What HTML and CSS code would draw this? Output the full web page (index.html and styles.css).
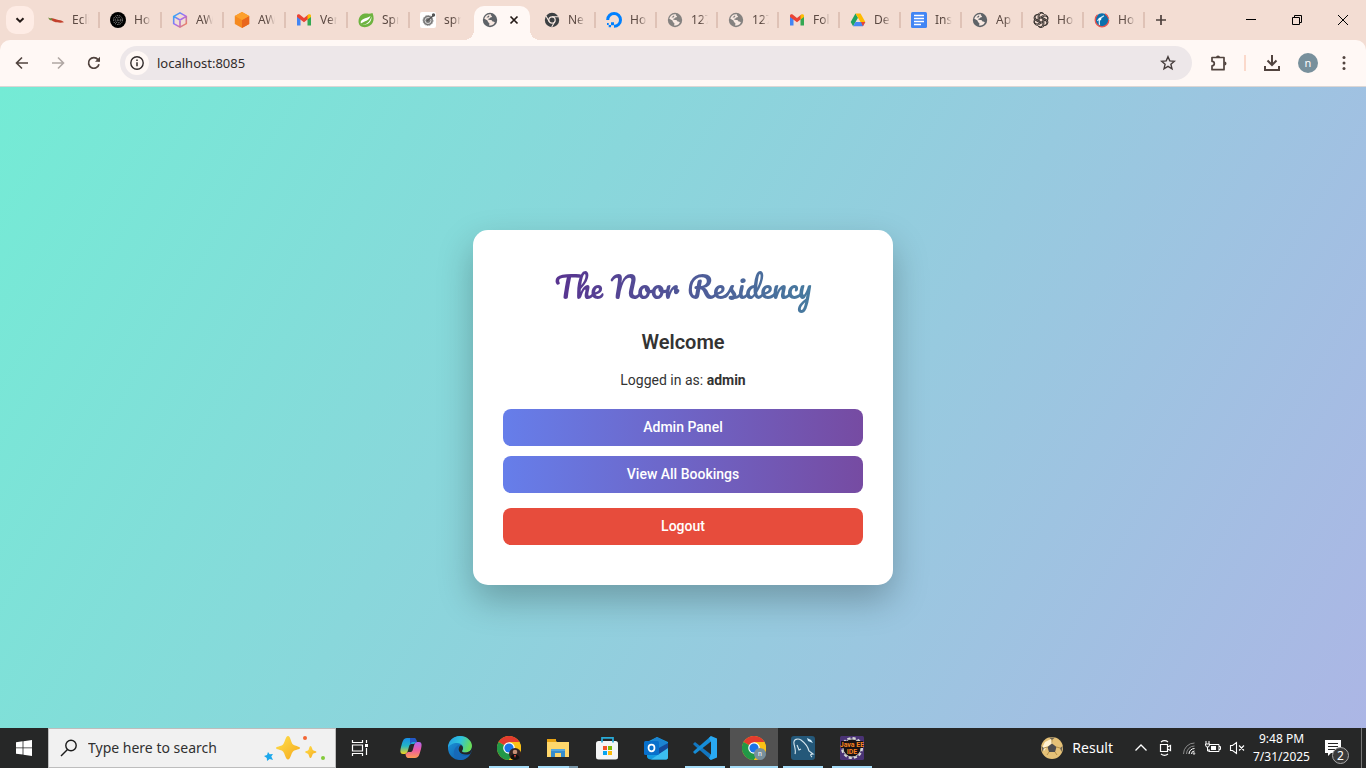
FILE: index.html
```html
<!DOCTYPE html>
<html lang="en">
<head>
<meta charset="utf-8">
<title>The Noor Residency</title>
<link rel="stylesheet" href="styles.css">
</head>
<body>
<svg class="defs" aria-hidden="true">
  <symbol id="globe" viewBox="0 0 16 16"><circle cx="8" cy="8" r="7.2" fill="currentColor"/><path d="M9 2.200C8.500 3.300 9 3.800 10 3.900c0 1.300-.8 1.500-1.900 1.600-.3 1.200-1.300 1.100-2 1.600.4.900 1.200.8 2.200.8 1.500 0 2 .7 2.200 1.600 1 0 1.900.1 2.400.8-.8 1.900-2 2.700-3.900 3.200-.8.200-1.400.1-2 0 .3-1.200.9-1.900-.2-2.700-.9-.6-1.200-1.300-1.300-2.200L2.300 6.700C2.900 4 5.500 1.800 9 2.200z" fill="#f8e9e2"/><path d="M3 7.500l2.500 2.300v1L3.500 11C2.500 10 2.200 9 2.200 7.500zM4.500 5.500h2l1-1.500-1-.5z" fill="currentColor"/></symbol>
  <symbol id="gmail" viewBox="0 0 16 16"><path d="M1 13.500V4l3.500 2.600v6.900z" fill="#4285f4"/><path d="M11.500 13.500V6.600L15 4v9.500z" fill="#34a853"/><path d="M1 5V3.700C1 2.200 2.600 1.800 3.600 2.600L8 6l4.400-3.400v4.200L8 10.300 1 5z" fill="#ea4335"/><path d="M11.500 7.500V3.300l.9-.7c1-.8 2.600-.4 2.600 1.100V5z" fill="#fbbc04"/></symbol>
  <symbol id="openai" viewBox="0 0 24 24"><g fill="none" stroke="currentColor" stroke-width="1.500"><path id="petal" d="M9.200 13.600V5.800a4.300 4.300 0 0 1 8-2.100M9.200 8.600l6.600-3.800a4.300 4.300 0 0 1 6 5.700"/><use href="#petal" transform="rotate(60 12 12)"/><use href="#petal" transform="rotate(120 12 12)"/><use href="#petal" transform="rotate(180 12 12)"/><use href="#petal" transform="rotate(240 12 12)"/><use href="#petal" transform="rotate(300 12 12)"/></g></symbol>
  <symbol id="chrome" viewBox="0 0 24 24"><circle cx="12" cy="12" r="12" fill="#fbc116"/><path d="M12 12L1.600 6A12 12 0 0 1 22.400 6H12z" fill="#e33b2e"/><path d="M1.600 6A12 12 0 0 0 12 24l5.200-9L12 12z" fill="#229847"/><path d="M12 24l5.200-9c1.600-3 .2-7-5.200-9h10.400A12 12 0 0 1 12 24z" fill="#fbc116"/><circle cx="12" cy="12" r="5.800" fill="#fff"/><circle cx="12" cy="12" r="4.600" fill="#1a73e8"/></symbol>
  <linearGradient id="lavender" x1="0" y1="0" x2="1" y2="1"><stop stop-color="#19b8f5"/><stop offset=".5" stop-color="#a46af5"/><stop offset="1" stop-color="#ff8a3c"/></linearGradient>
  <linearGradient id="cop-a" x1="0" y1="0" x2="0" y2="1"><stop stop-color="#188de8"/><stop offset=".5" stop-color="#24b5c5"/><stop offset="1" stop-color="#f5d51b"/></linearGradient>
  <linearGradient id="cop-b" x1="0" y1="0" x2="0" y2="1"><stop stop-color="#b065f1"/><stop offset=".5" stop-color="#ef5ca1"/><stop offset="1" stop-color="#ff9b52"/></linearGradient>
  <linearGradient id="edge-a" x1="0" y1="0" x2="1" y2=".3"><stop stop-color="#249ce4"/><stop offset=".55" stop-color="#2fc4dd"/><stop offset="1" stop-color="#69dc59"/></linearGradient>
  <linearGradient id="edge-b" x1="0" y1="0" x2="1" y2="1"><stop stop-color="#1d9be0"/><stop offset="1" stop-color="#0c4d9c"/></linearGradient>
  <linearGradient id="gold" x1="0" y1="0" x2="1" y2="1"><stop stop-color="#ffe14d"/><stop offset="1" stop-color="#f5a81c"/></linearGradient>
</svg>

<header class="browser">
  <div class="tabstrip">
    <button class="tab-search" aria-label="Search tabs"><svg viewBox="0 0 28 28"><path d="M10.500 12.200l3.500 3.500 3.500-3.500" fill="none" stroke="#241a17" stroke-width="2"/></svg></button>
    <nav class="tabs" aria-label="Open tabs">
      <a class="tab" href="#"><svg viewBox="0 0 16 16"><path d="M2.500 6.500c3-.7 5 1.300 8 1.500 2.500.2 4.500 1 5.500 2.300-4 .9-12 .3-13.500-3.800z" fill="#c2402c"/><path d="M0 5.500l2 .7 2.500.3-1 1.900-1.800-.5z" fill="#6e8c3b"/></svg><span>Ecli</span></a>
      <a class="tab" href="#"><svg viewBox="0 0 16 16"><circle cx="8" cy="8" r="8" fill="#000"/><g fill="none" stroke="#bbb" stroke-width="1" stroke-dasharray=".8 1"><circle cx="8" cy="8" r="4.500"/><circle cx="8" cy="8" r="2.800"/><circle cx="8" cy="8" r="1"/></g></svg><span>Ho</span></a>
      <a class="tab" href="#"><svg viewBox="0 0 16 16"><path d="M8 .9l6.300 3.500v7.200L8 15.100l-6.300-3.500V4.400zM1.700 4.400L8 8l6.300-3.600M8 8v7" fill="none" stroke="url(#lavender)" stroke-width="1.600"/></svg><span>AW</span></a>
      <a class="tab" href="#"><svg viewBox="0 0 16 16"><path d="M8 0l7.200 4v8L8 16 .8 12V4z" fill="#f58a20"/><path d="M8 8l7.200-4v8L8 16z" fill="#e9661c"/><path d="M8 0l7.200 4L8 8 .8 4z" fill="#fda02d"/></svg><span>AW</span></a>
      <a class="tab" href="#"><svg><use href="#gmail"/></svg><span>Ver</span></a>
      <a class="tab" href="#"><svg viewBox="0 0 16 16"><path d="M14.500 1c2 5 1.500 10-2.500 12.500C8.500 16 4 15.500 2 13.500-.5 10.500.2 5 4 2.500c3-2 7 .2 10.500-1.500z" fill="#6db33f"/><path d="M2.500 12.500c4 .8 9-1 11-8 .3 5-3 9.500-11 8z" fill="#fff"/><path d="M2.800 11.500c-1-5 5-4.500 9.700-7.500-1.500 5-6 5-9.700 7.500z" fill="#fff"/></svg><span>Spr</span></a>
      <a class="tab" href="#"><svg viewBox="0 0 16 16"><rect width="16" height="16" rx="2" fill="#fff"/><circle cx="8" cy="8.500" r="5" fill="#777" stroke="#999" stroke-dasharray="1.500 1"/><circle cx="8" cy="8.500" r="3" fill="none" stroke="#ddd"/><path d="M7 9l7-6" stroke="#555" stroke-width="1.500"/><circle cx="13.500" cy="3" r="1.700" fill="#555"/></svg><span>spr</span></a>
      <a class="tab active" href="#" aria-current="page"><svg class="slate"><use href="#globe"/></svg><svg class="close" viewBox="0 0 16 16"><path d="M4.500 4.500l7 7m0-7l-7 7" stroke="#241a17" stroke-width="1.700"/></svg></a>
      <a class="tab" href="#"><svg viewBox="0 0 16 16"><circle cx="8" cy="8" r="7.200" fill="#3c4043"/><circle cx="8" cy="8" r="3.200" fill="none" stroke="#f8e9e2" stroke-width="1.200"/><path d="M8 4.800h6.500M5.200 9.600L2 4M10.800 9.600L7.700 15" stroke="#f8e9e2" stroke-width="1.100"/></svg><span>Ne</span></a>
      <a class="tab" href="#"><svg viewBox="0 0 16 16"><path d="M8 14.300A6.400 6.400 0 1 0 1.700 8" fill="none" stroke="#0080ff" stroke-width="3"/><path d="M5 10.200h3v3H5zM2.700 13H5v2.300H2.700zM1 11h1.700v2H1z" fill="#0080ff"/></svg><span>Ho</span></a>
      <a class="tab" href="#"><svg class="gray"><use href="#globe"/></svg><span>127</span></a>
      <a class="tab" href="#"><svg class="gray"><use href="#globe"/></svg><span>127</span></a>
      <a class="tab" href="#"><svg><use href="#gmail"/></svg><span>Fol</span></a>
      <a class="tab" href="#"><svg viewBox="0 0 16 16"><path d="M5.500 1.500L.7 10l2.400 4.200L8 5.800z" fill="#1ea362"/><path d="M5.500 1.500h5L15.300 10h-4.800z" fill="#ffba00"/><path d="M3.100 14.200L5.500 10h9.800l-2.400 4.200z" fill="#4688f4"/><path d="M11 10h4.300l-2.400 4.200z" fill="#ea4335"/></svg><span>De</span></a>
      <a class="tab" href="#"><svg viewBox="0 0 16 16"><rect width="16" height="16" rx="1.500" fill="#4285f4"/><path d="M3 3.500h10M3 6.500h10M3 9.500h10M3 12.500h7" stroke="#fff" stroke-width="1.500"/></svg><span>Ins</span></a>
      <a class="tab" href="#"><svg class="slate"><use href="#globe"/></svg><span>Ap</span></a>
      <a class="tab" href="#"><svg class="ink"><use href="#openai"/></svg><span>Ho</span></a>
      <a class="tab" href="#"><svg viewBox="0 0 16 16"><circle cx="8" cy="8" r="6.800" fill="#0c6fac" stroke="#e6544f" stroke-width="1.300" stroke-dasharray="27 8 6 4"/><path d="M3.500 9c1.500-3 3.500-4 6.500-5M5.500 13c-1-4 .500-7 4-9" fill="none" stroke="#d4effa" stroke-width="1.200"/><circle cx="6" cy="7" r="1.300" fill="#fff"/></svg><span>Ho</span></a>
    </nav>
    <button class="new-tab" aria-label="New tab"><svg viewBox="0 0 16 16"><path d="M8 3v10M3 8h10" stroke="#4c403c" stroke-width="1.700"/></svg></button>
    <div class="window-controls">
      <button aria-label="Minimize"><svg viewBox="0 0 16 16"><path d="M3 7.500h10" stroke="#000"/></svg></button>
      <button aria-label="Restore"><svg viewBox="0 0 16 16"><path d="M3.500 5.500h7v7h-7zM5.500 5.500v-2h7v7h-2" fill="none" stroke="#000"/></svg></button>
      <button aria-label="Close"><svg viewBox="0 0 16 16"><path d="M3 3l10 10M13 3L3 13" stroke="#000"/></svg></button>
    </div>
  </div>
  <div class="toolbar">
    <button class="nav-button" aria-label="Back"><svg viewBox="0 0 16 16"><path d="M14 8H3M8 2.500L2.500 8 8 13.500" fill="none" stroke="#51433e" stroke-width="1.600"/></svg></button>
    <button class="nav-button" aria-label="Forward"><svg viewBox="0 0 16 16"><path d="M2 8h11M8 2.500L13.500 8 8 13.500" fill="none" stroke="#b0a7a3" stroke-width="1.600"/></svg></button>
    <button class="nav-button" aria-label="Reload"><svg viewBox="0 0 16 16"><path d="M13 9.200A5.300 5.300 0 1 1 12 4.600l1.500 1.700" fill="none" stroke="#51433e" stroke-width="1.700"/><path d="M14 1.800v5H9z" fill="#51433e"/></svg></button>
    <div class="omnibox">
      <button class="site-info" aria-label="Site information"><svg viewBox="0 0 16 16"><circle cx="8" cy="8" r="6.200" fill="none" stroke="#312b2b" stroke-width="1.400"/><path d="M8 7.200v4M8 4.500V6" stroke="#312b2b" stroke-width="1.500"/></svg></button>
      <input class="address" aria-label="Address" value="localhost:8085">
      <button class="bookmark" aria-label="Bookmark this page"><svg viewBox="0 0 16 16"><path d="M8 1.700l1.800 4.200 4.600.4-3.500 3 1.100 4.500L8 11.400l-4 2.400 1.100-4.500-3.500-3 4.600-.4z" fill="none" stroke="#453c3b" stroke-width="1.400"/></svg></button>
    </div>
    <div class="actions">
      <button aria-label="Extensions"><svg viewBox="0 0 20 20"><path d="M4 4.500h12v12.200H4v-3.800a2.300 2.300 0 0 0 0-4.600z" fill="none" stroke="#51433e" stroke-width="1.700" stroke-linejoin="round"/><path d="M8 4.500a2 2 0 0 1 4 0zM16.500 8.500a2 2 0 0 1 0 4z" fill="#51433e"/></svg></button>
      <i class="divider"></i>
      <button aria-label="Downloads"><svg viewBox="0 0 20 20"><path d="M10 2v10M5.500 7.500L10 12l4.500-4.500M3 13v4h14v-4" fill="none" stroke="#51433e" stroke-width="2"/></svg></button>
      <button class="profile" aria-label="Profile">n</button>
      <button aria-label="Menu"><svg viewBox="0 0 20 20" fill="#51433e"><circle cx="10" cy="4.500" r="1.500"/><circle cx="10" cy="10" r="1.500"/><circle cx="10" cy="15.500" r="1.500"/></svg></button>
    </div>
  </div>
</header>

<main class="page">
  <section class="card">
    <h1 class="brand">The Noor Residency</h1>
    <h2 class="welcome">Welcome</h2>
    <p class="session">Logged in as: <strong>admin</strong></p>
    <a class="button" href="#">Admin Panel</a>
    <a class="button" href="#">View All Bookings</a>
    <button class="button logout">Logout</button>
  </section>
</main>

<footer class="taskbar">
  <button class="start" aria-label="Start"><svg viewBox="0 0 16 16" fill="#fff"><path d="M0 2.300L6.600 1.300v6.200H0zM7.400 1.200L16 0v7.500H7.400zM0 8.300h6.600v6.300L0 13.700zM7.400 8.300H16V16l-8.600-1.200z"/></svg></button>
  <div class="search">
    <svg class="magnifier" viewBox="0 0 18 18"><circle cx="11" cy="6.500" r="5.200" fill="none" stroke="#1b1b1b" stroke-width="1.400"/><path d="M7.500 10.500L1 17" stroke="#1b1b1b" stroke-width="1.400"/></svg>
    <input aria-label="Search" placeholder="Type here to search">
    <svg class="sparkles" viewBox="0 0 64 28"><path d="M25 2c2.500 0 3 7 5 8.500S37 12.500 37 14s-5 1.500-7 3.500S27.500 25.500 25 25.500 22 19.500 20 17.500 13 15.500 13 14s5-1.500 7-3.500S22.500 2 25 2z" fill="url(#gold)"/><path d="M47.500 12c1.300 0 1.600 3.500 2.600 4.300s3.400.7 3.400 1.700-2.700.9-3.500 1.800-1.200 4.200-2.500 4.200-1.500-3.300-2.300-4.100-3.200-.9-3.200-1.900 2.500-.9 3.300-1.700.9-4.300 2.200-4.300z" fill="url(#gold)"/><path d="M5 18l1.700 2.300L10 20l-1.700 2.500L10 26l-3.300-1L4 27l-.2-3L1 22l3-1z" fill="#1ca8ec"/><circle cx="42" cy="4" r="2" fill="#f26634"/><circle cx="60" cy="24" r="2" fill="#84ca3a"/></svg>
  </div>
  <button class="task-view" aria-label="Task view"><svg viewBox="0 0 18 18" fill="none" stroke="#fff" stroke-width="1.200"><path d="M1.500 1v2.500h10V1M1.500 17v-2.500h10V17M1.500 6h10v6h-10zM15.500 1v3M15.500 9v7"/><path d="M14 5h3v3h-3z" fill="#fff" stroke="none"/></svg></button>
  <nav class="apps" aria-label="Pinned apps">
    <button aria-label="Copilot"><svg viewBox="0 0 24 24"><path d="M8 2h6c3 0 3 2 3.500 4L15 8h-3c-3 0-2 10-6 10H4c-3 0-3-3-2-7 1.500-5 2-9 6-9z" fill="url(#cop-a)"/><path d="M11 2h4c2 0 2.500 2 3 4h-3c-2 0-3 0-4 3z" fill="#2358c7"/><path d="M16 22h-6c-3 0-3-2-3.500-4L9 16h3c3 0 2-10 6-10h2c3 0 3 3 2 7-1.500 5-2 9-6 9z" fill="url(#cop-b)"/></svg></button>
    <button aria-label="Edge"><svg viewBox="0 0 24 24"><circle cx="12" cy="12" r="12" fill="url(#edge-b)"/><path d="M0 12C0 5 5 0 12 0s12 5 12 10-4 6.500-7 6.500-3.500-1.500-2.500-2.500C16.500 11 14 7 9 7c-4 0-8 2-9 5z" fill="url(#edge-a)"/><path d="M13 9c-3 1-4 4-3 7 1.500 4 7 5 12 2-2 4-6 6-10 6C5 23 4 14 9 10c1.500-1 2.500-1.300 4-1z" fill="#1769b8"/><path d="M13 9c-2 1-3 4-2 6 2 4 7 4 11 3l2-4v-4c0 5-4 6.500-7 6.500S13.500 15 14.500 14c1-1.500.5-4-1.500-5z" fill="#252525"/></svg></button>
    <button class="running" aria-label="Chrome, first profile"><svg viewBox="0 0 24 24"><use href="#chrome"/><circle cx="18" cy="18" r="6" fill="#322322"/><circle cx="18" cy="16" r="2.300" fill="#c69077"/><path d="M13.500 22c0-5 8-5 9 0-3 2.500-6 2.500-9 0z" fill="#111"/><path d="M17 19h2l-1 3z" fill="#e5453c"/></svg></button>
    <button class="running stacked" aria-label="File Explorer"><svg viewBox="0 0 24 24"><path d="M1 4h8l2 2h12v15H1z" fill="#f6b83a"/><path d="M1 6h22v15H1z" fill="#ffd76b"/><path d="M1 3h9v3H1z" fill="#e8a313"/><path d="M5 13h14v8h-4v-4H9v4H5z" fill="#368dcc"/><path d="M5 13h14v2H5z" fill="#56a8de"/></svg></button>
    <button aria-label="Microsoft Store"><svg viewBox="0 0 24 24"><rect x="1" y="5" width="22" height="18.500" rx="2.500" fill="#f4f5f5"/><path d="M7 6.500V1.800h11v4.700" fill="none" stroke="#29acd9" stroke-width="1.700"/><path d="M8 10h4v4H8z" fill="#f15325"/><path d="M13 10h4v4h-4z" fill="#80bb04"/><path d="M8 15h4v4H8z" fill="#06a5f0"/><path d="M13 15h4v4h-4z" fill="#febb08"/></svg></button>
    <button aria-label="Outlook"><svg viewBox="0 0 24 24"><path d="M3 6l10-5 11 5v15c0 2-1 2.500-3 2.500H7c-2 0-4-1-4-3z" fill="#139be0"/><path d="M4 7l9-6 11 6-12 7z" fill="#1c84d2"/><path d="M13 13l11-6v7l-9 4z" fill="#144a9b"/><path d="M24 12v9c0 2-1 2.500-3 2.500H7z" fill="#3cbdf0"/><rect y="5" width="15" height="14" rx="1.500" fill="#0870cb"/><ellipse cx="7.500" cy="12" rx="3" ry="3.300" fill="none" stroke="#fff" stroke-width="1.700"/></svg></button>
    <button class="running" aria-label="Visual Studio Code"><svg viewBox="0 0 24 24"><path d="M0 8l2-2 16 12.500V24L2 10z" fill="#1276bf"/><path d="M0 16l2 2L18 5.500V0L2 14z" fill="#168dd7"/><path d="M18 0l6 2.500v19L18 24l-2-1.500 2-4.500V6l-2-4z" fill="#29a9f2"/></svg></button>
    <button class="running current" aria-label="Chrome, profile n"><svg viewBox="0 0 24 24"><use href="#chrome"/><circle cx="18" cy="18" r="6" fill="#78909c"/><text class="badge-letter" x="18" y="20">n</text></svg></button>
    <button class="running" aria-label="MySQL Workbench"><svg viewBox="0 0 24 24"><rect width="24" height="24" rx="3" fill="#245879"/><path d="M4 18c1-3 0-6-1-10-1-5 4-6 7-4 4 3 7 7 8 11l4 3c-3 0-3 1-1 3M6 9l2 5 2-1" fill="none" stroke="#d6e6ee" stroke-width="1.100"/><path d="M16 2l1 3 5 2-2-3z" fill="#d8f1ff"/></svg></button>
    <button class="running" aria-label="Eclipse Java EE IDE"><svg viewBox="0 0 24 24"><rect width="24" height="24" rx="1.500" fill="#4a3375"/><circle cx="12" cy="12" r="9.500" fill="none" stroke="#d9d9d9" stroke-width="3" stroke-dasharray="3 2"/><circle cx="12" cy="12" r="9" fill="#171216" stroke="#bbb"/><path d="M1 5h22v7H1z" fill="#171216"/><text class="ide-text" x="12" y="11">Java EE</text><text class="ide-text" x="12" y="18">IDE</text></svg></button>
  </nav>
  <div class="tray">
    <a class="result" href="#"><svg viewBox="0 0 22 22"><circle cx="11" cy="11" r="11" fill="#e5c177"/><path d="M4 5l6-3 2 4-6 4-3 4-2-3z" fill="#fff2d0"/><path d="M11 6.500l4.500 3.500-1.500 5H8l-1.500-5z" fill="#4c4b4d"/><path d="M8 .5h6L11 3zM.2 9L3 11l-1.500 4zM21.800 9L19 11l1.500 4z" fill="#6b6252"/><path d="M11 3v3.500M3 11l3.500-1M19 11l-3.500-1M8 15l-2 3M14 15l2 3" stroke="#b58f46"/></svg>Result</a>
    <div class="status">
      <button aria-label="Show hidden icons"><svg viewBox="0 0 16 16"><path d="M2.500 10.500L8 5l5.500 5.500" fill="none" stroke="#fff" stroke-width="1.300"/></svg></button>
      <button aria-label="Meet Now"><svg viewBox="0 0 16 16"><path d="M3.500 4.500h7v7h-7zM10.500 7l3-1.500v5l-3-1.500M4 2c2-1.500 5-1.500 7 0M4 14c2 1.500 5 1.500 7 0" fill="none" stroke="#fff" stroke-width="1.200"/></svg></button>
      <button aria-label="Network"><svg viewBox="0 0 16 16" fill="none" stroke="#8b8b8b"><path d="M2.500 14A11 11 0 0 1 13.500 3M5.500 14a8 8 0 0 1 8-8"/><path d="M8 14a5.500 5.500 0 0 1 5.500-5.500M10.500 14a3 3 0 0 1 3-3" stroke="#fff"/><circle cx="13" cy="13.500" r="1" fill="#fff"/></svg></button>
      <button aria-label="Battery"><svg viewBox="0 0 16 16"><path d="M5 4.500h9v7H4V9M14 6.500h1.500v3H14M1 1v3M4 1v3M2.500 7v4H5M.5 4h4v1l-1 2h-2l-1-2z" fill="none" stroke="#fff"/><path d="M6 6h5v4H6z" fill="#fff"/></svg></button>
      <button aria-label="Volume muted"><svg viewBox="0 0 16 16"><path d="M1.500 5.500h2l4-3v11l-4-3h-2zM10 5.500l5 5M15 5.500l-5 5" fill="none" stroke="#fff" stroke-width="1.100"/></svg></button>
    </div>
    <div class="clock"><time>9:48 PM</time><time>7/31/2025</time></div>
    <button class="notifications" aria-label="2 notifications"><svg viewBox="0 0 16 16"><path d="M0 0h16v13H6l-3 3v-3H0z" fill="#fff"/><path d="M3 3.500h10M3 6.500h10M3 9.500h7" stroke="#252525"/></svg><span>2</span></button>
  </div>
</footer>
</body>
</html>
```
FILE: styles.css
```css
* { box-sizing: border-box; }

body {
  margin: 0;
  min-height: 100vh;
  display: flex;
  flex-direction: column;
  font-family: "Noto Sans", "Open Sans", sans-serif;
}

button {
  display: flex;
  align-items: center;
  justify-content: center;
  padding: 0;
  border: 0;
  background: none;
  font: inherit;
  color: inherit;
}

a { color: inherit; text-decoration: none; }
input { border: 0; padding: 0; background: none; font: inherit; outline: 0; min-width: 0; }
svg { width: 16px; height: 16px; flex: none; display: block; }
.defs { position: absolute; width: 0; height: 0; }

/* Browser window */
.browser { background: #f3ddd3; }
.tabstrip { height: 40px; display: flex; align-items: center; padding-left: 6px; }
.tab-search { width: 28px; height: 28px; border-radius: 10px; background: #feece5; }
.tab-search svg { width: 28px; height: 28px; }

.tabs {
  flex: 0 1 1107px;
  min-width: 0;
  margin-left: 4px;
  align-self: stretch;
  display: grid;
  grid-template-columns: repeat(9, 62fr) repeat(9, 61fr);
}
.tab {
  min-width: 0;
  display: flex;
  align-items: center;
  gap: 8px;
  padding: 0 6px 0 10px;
  font-size: 12px;
  line-height: 16px;
  color: #5c4a43;
  background: linear-gradient(#dfc2b6, #dfc2b6) right 12px / 2px 16px no-repeat;
}
.tab span {
  flex: none;
  white-space: nowrap;
  mask-image: linear-gradient(90deg, #000 9px, transparent 17px);
}
.tab:nth-child(7) { background: none; }
.slate { color: #5f6368; }
.gray { color: #858280; }
.ink { color: #3b3532; }

.tab.active {
  position: relative;
  align-self: end;
  height: 34px;
  margin: 0 4px 0 2px;
  padding: 0 8px 6px;
  border-radius: 10px 10px 0 0;
  background: #fff8f5;
}
.tab.active::before,
.tab.active::after {
  content: "";
  position: absolute;
  bottom: 0;
  width: 10px;
  height: 10px;
}
.tab.active::before { right: 100%; background: radial-gradient(circle at 0 0, transparent 10px, #fff8f5 10px); }
.tab.active::after { left: 100%; background: radial-gradient(circle at 100% 0, transparent 10px, #fff8f5 10px); }

.new-tab { width: 32px; height: 40px; }
.window-controls { margin-left: auto; display: flex; }
.window-controls button { width: 46px; height: 40px; }

.toolbar {
  height: 47px;
  display: flex;
  align-items: center;
  padding: 0 10px 0 4px;
  border-bottom: 1px solid #dcd6d4;
  border-radius: 10px 10px 0 0;
  background: #fff8f5;
}
.nav-button { width: 36px; height: 34px; }
.omnibox {
  flex: 1;
  height: 34px;
  margin-left: 8px;
  padding: 0 12px 0 5px;
  display: flex;
  align-items: center;
  border-radius: 17px;
  background: #ede7e9;
}
.site-info { width: 24px; height: 24px; border-radius: 50%; background: #fff8f5; }
.address { flex: 1; margin-left: 8px; font-size: 13px; line-height: 20px; color: #312b2b; }
.bookmark { width: 24px; height: 24px; }
.actions { display: flex; align-items: center; margin-left: 14px; }
.actions button { width: 24px; height: 24px; }
.actions svg { width: 20px; height: 20px; }
.actions button + button { margin-left: 12px; }
.divider { width: 2px; height: 16px; margin: 0 14px; background: #fbd9cb; }
.actions .profile {
  width: 20px;
  height: 20px;
  margin: 0 2px 0 14px;
  border-radius: 50%;
  background: #78909c;
  color: #fff;
  font-size: 11px;
  line-height: 16px;
}

/* Page */
.page {
  flex: 1;
  display: flex;
  align-items: center;
  justify-content: center;
  padding: 20px;
  background: linear-gradient(120deg, #74ebd5, #acb6e5);
  font-family: Roboto, sans-serif;
}
.card {
  width: 100%;
  max-width: 420px;
  padding: 30px 30px 40px;
  border-radius: 15px;
  background: #fff;
  box-shadow: 0 15px 35px rgba(0, 0, 0, 0.25);
  text-align: center;
  color: #333;
}
.brand {
  margin: 0 0 16px;
  font: 400 30px/54px Pacifico, "Liberation Serif", cursive;
  background: linear-gradient(90deg, #5c258d, #4389a2);
  background-clip: text;
  color: transparent;
}
.welcome { margin: 0 0 16px; font-size: 20px; line-height: 24px; font-weight: 600; }
.session { margin: 0 0 19px; font-size: 14px; line-height: 20px; }
.button {
  display: block;
  width: 100%;
  padding: 8px;
  border-radius: 8px;
  background: linear-gradient(90deg, #667eea, #764ba2);
  color: #fff;
  font-size: 14px;
  line-height: 21px;
  font-weight: 500;
}
.button + .button { margin-top: 10px; }
.button + .logout { margin-top: 15px; background: #e74c3c; }

/* Taskbar */
.taskbar { height: 40px; display: flex; align-items: stretch; background: #262727; color: #fff; }
.start, .task-view { width: 48px; }
.task-view svg { width: 18px; height: 18px; }
.search {
  width: 288px;
  display: flex;
  align-items: center;
  padding: 0 8px 0 11px;
  border: 1px solid #bdbdbd;
  background: #f1f1f1;
}
.search .magnifier { width: 18px; height: 18px; }
.search input { flex: 1; margin-left: 10px; font-size: 14px; line-height: 20px; }
.search input::placeholder { color: #303030; opacity: 1; }
.search .sparkles { width: 64px; height: 28px; }
.apps { display: flex; gap: 1px; margin-left: 3px; }
.apps button { position: relative; width: 48px; }
.apps svg { width: 24px; height: 24px; }
.apps .running::after {
  content: "";
  position: absolute;
  bottom: 0;
  left: 4px;
  right: 4px;
  height: 2px;
  background: #a5dcf8;
}
.apps .stacked::after { background: linear-gradient(90deg, #a5dcf8 31px, #7896a8 31px); }
.apps .current { background: #525252; }
.apps .current::after { left: 0; right: 0; }
.badge-letter { font: 7px Roboto, sans-serif; fill: #fff; text-anchor: middle; }
.ide-text { font: 700 7px Roboto, sans-serif; fill: #f58220; text-anchor: middle; }

.tray { margin-left: auto; display: flex; align-items: stretch; }
.result { display: flex; align-items: center; gap: 9px; font-size: 14px; line-height: 20px; }
.result svg { width: 22px; height: 22px; }
.status { display: flex; margin-left: 16px; }
.status button { width: 24px; }
.clock {
  width: 65px;
  display: flex;
  flex-direction: column;
  justify-content: center;
  align-items: center;
  font-size: 12px;
  line-height: 18px;
}
.notifications { position: relative; width: 48px; margin-right: 4px; border-right: 1px solid #777; }
.notifications svg { margin-right: 10px; }
.notifications span {
  position: absolute;
  right: 12px;
  bottom: 4px;
  width: 17px;
  height: 17px;
  border: 1px solid #aaa;
  border-radius: 50%;
  background: #3a3a3a;
  font-size: 12px;
  line-height: 15px;
}
```
